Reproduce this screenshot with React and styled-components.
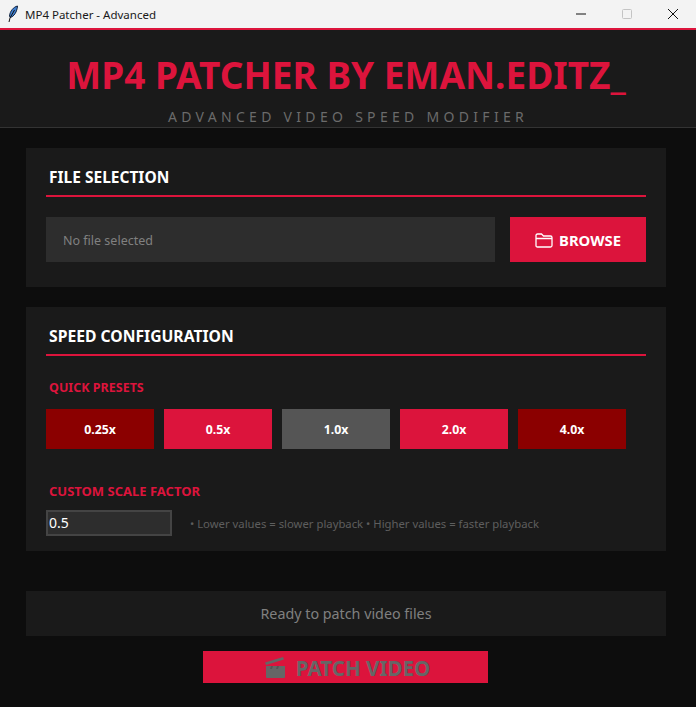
import React from "react";
import styled, { createGlobalStyle } from "styled-components";

const GlobalStyle = createGlobalStyle`
  html, body {
    margin: 0;
    padding: 0;
    height: 100%;
    overflow: hidden;
    background: #0d0d0d;
  }
  * { box-sizing: border-box; }
`;

const crimson = "#dc143c";
const font = `"Noto Sans", "Open Sans", sans-serif`;

const Window = styled.div`
  width: 696px;
  height: 707px;
  display: flex;
  flex-direction: column;
  background: #0d0d0d;
  font-family: ${font};
  overflow: hidden;
`;

const TitleBar = styled.div`
  height: 28px;
  flex: none;
  display: flex;
  align-items: center;
  background: #f3f3f3;
  padding-left: 7px;
`;

const TitleText = styled.span`
  margin-left: 6px;
  font-size: 11.5px;
  color: #1a1a1a;
  white-space: nowrap;
  flex: 1;
`;

const WinButton = styled.div`
  width: 46px;
  height: 28px;
  display: flex;
  align-items: center;
  justify-content: center;
`;

const Header = styled.header`
  height: 100px;
  flex: none;
  border-top: 2px solid ${crimson};
  border-bottom: 1px solid #333;
  background: #1a1a1a;
  display: flex;
  flex-direction: column;
  align-items: center;
`;

const Title = styled.h1`
  margin: 22px 4px 0 0;
  font-size: 37px;
  line-height: 46px;
  font-weight: 700;
  color: ${crimson};
  white-space: nowrap;
`;

const Subtitle = styled.div`
  margin-top: 9px;
  font-size: 14px;
  line-height: 19px;
  letter-spacing: 4.3px;
  color: #6b6b6b;
  white-space: nowrap;
`;

const Main = styled.main`
  display: flex;
  flex-direction: column;
  padding: 20px 30px 0 26px;
`;

const Panel = styled.section`
  height: ${(p) => p.$height}px;
  margin-bottom: 20px;
  background: #1a1a1a;
  padding: 18px 20px 0;
`;

const PanelTitle = styled.h2`
  margin: 0;
  height: 31px;
  padding-left: 3px;
  border-bottom: 2px solid ${crimson};
  font-size: ${(p) => p.$size}px;
  line-height: 22px;
  font-weight: 700;
  color: #fff;
`;

const FileRow = styled.div`
  display: flex;
  gap: 15px;
  margin-top: 20px;
`;

const FileField = styled.div`
  flex: 1;
  height: 45px;
  display: flex;
  align-items: center;
  padding: 2px 0 0 17px;
  background: #2d2d2d;
  color: #808080;
  font-size: 12.5px;
`;

const BrowseButton = styled.button`
  width: 136px;
  height: 45px;
  border: 0;
  background: ${crimson};
  color: #fff;
  display: flex;
  align-items: center;
  justify-content: center;
  gap: 6px;
  font-family: ${font};
  font-size: 14.8px;
  font-weight: 700;
`;

const Label = styled.div`
  margin: ${(p) => p.$top}px 0 0 3px;
  height: 18px;
  font-size: ${(p) => p.$size}px;
  line-height: 18px;
  font-weight: 700;
  color: ${crimson};
  white-space: nowrap;
`;

const PresetRow = styled.div`
  display: flex;
  gap: 10px;
  margin-top: 12px;
`;

const tones = { dark: "#8b0000", red: crimson, grey: "#555" };

const Preset = styled.button`
  width: 108px;
  height: 40px;
  border: 0;
  background: ${(p) => tones[p.$tone]};
  color: #fff;
  font-family: ${font};
  font-size: 12.3px;
  font-weight: 700;
`;

const ScaleRow = styled.div`
  display: flex;
  align-items: center;
  margin-top: 10px;
`;

const ScaleInput = styled.div`
  width: 126px;
  height: 26px;
  border: 2px solid #444;
  background: #2d2d2d;
  color: #fff;
  padding-left: 1px;
  font-size: 14px;
  line-height: 21px;
`;

const Hint = styled.span`
  margin-left: 18px;
  font-size: 11.3px;
  color: #5e5e5e;
  white-space: nowrap;
`;

const Status = styled.div`
  margin-top: 20px;
  height: 45px;
  background: #1a1a1a;
  color: #808080;
  font-size: 14.3px;
  display: flex;
  align-items: center;
  justify-content: center;
`;

const PatchButton = styled.button`
  align-self: center;
  margin: 15px 0 0 -2px;
  width: 285px;
  height: 32px;
  border: 0;
  padding: 1px 0 0 5px;
  background: ${crimson};
  color: #666;
  display: flex;
  align-items: center;
  justify-content: center;
  gap: 11px;
  font-family: ${font};
  font-size: 20.6px;
  line-height: 26px;
  font-weight: 700;
`;

const Feather = () => (
  <svg width="12" height="18" viewBox="0 0 12 18">
    <path d="M10.5 1C6.5 2 3 6 2.5 11l.8 1.5C7 11.5 10 7 10.5 1z" fill="#3f7fd0" stroke="#10233f" strokeWidth="1" />
    <path d="M7.5 5 3 13 2 17" fill="none" stroke="#111" strokeWidth="1" />
  </svg>
);

const Minimize = () => (
  <svg width="10" height="10" viewBox="0 0 10 10">
    <path d="M0 5h10" stroke="#111" strokeWidth="1" />
  </svg>
);

const Maximize = () => (
  <svg width="10" height="10" viewBox="0 0 10 10">
    <rect x="0.5" y="0.5" width="9" height="9" rx="1" fill="none" stroke="#c4c4c4" />
  </svg>
);

const Close = () => (
  <svg width="10" height="10" viewBox="0 0 10 10">
    <path d="M0 0l10 10M10 0 0 10" stroke="#111" strokeWidth="1" />
  </svg>
);

const FolderIcon = () => (
  <svg width="18" height="16" viewBox="0 0 18 16">
    <path
      d="M1 3.500C1 2.500 1.500 2 2.500 2h4l2 2h7c1 0 1.500.5 1.500 1.500v8c0 1-.5 1.500-1.500 1.500h-13C1.500 15 1 14.500 1 13.500zM1 6.500h16"
      fill="none"
      stroke="#fff"
      strokeWidth="1.3"
    />
  </svg>
);

const ClapperIcon = () => (
  <svg width="20" height="21" viewBox="0 0 20 21">
    <path d="M0 5.500 18 0l1 2.500L1 8z" fill="#666" />
    <path d="M1 9h19v11a1 1 0 0 1-1 1H2a1 1 0 0 1-1-1z" fill="#666" />
    <path d="M6 9h2l-1 3H5zM12 9h2l-1 3h-2z" fill="#555" />
  </svg>
);

export default function App() {
  return (
    <Window>
      <GlobalStyle />
      <TitleBar>
        <Feather />
        <TitleText>MP4 Patcher - Advanced</TitleText>
        <WinButton><Minimize /></WinButton>
        <WinButton><Maximize /></WinButton>
        <WinButton><Close /></WinButton>
      </TitleBar>
      <Header>
        <Title>MP4 PATCHER BY EMAN.EDITZ_</Title>
        <Subtitle>ADVANCED VIDEO SPEED MODIFIER</Subtitle>
      </Header>
      <Main>
        <Panel $height={139}>
          <PanelTitle $size={15.5}>FILE SELECTION</PanelTitle>
          <FileRow>
            <FileField>No file selected</FileField>
            <BrowseButton><FolderIcon />BROWSE</BrowseButton>
          </FileRow>
        </Panel>
        <Panel $height={244}>
          <PanelTitle $size={15.7}>SPEED CONFIGURATION</PanelTitle>
          <Label $top={23} $size={12.5}>QUICK PRESETS</Label>
          <PresetRow>
            <Preset $tone="dark">0.25x</Preset>
            <Preset $tone="red">0.5x</Preset>
            <Preset $tone="grey">1.0x</Preset>
            <Preset $tone="red">2.0x</Preset>
            <Preset $tone="dark">4.0x</Preset>
          </PresetRow>
          <Label $top={33} $size={13}>CUSTOM SCALE FACTOR</Label>
          <ScaleRow>
            <ScaleInput>0.5</ScaleInput>
            <Hint>• Lower values = slower playback • Higher values = faster playback</Hint>
          </ScaleRow>
        </Panel>
        <Status>Ready to patch video files</Status>
        <PatchButton><ClapperIcon />PATCH VIDEO</PatchButton>
      </Main>
    </Window>
  );
}
